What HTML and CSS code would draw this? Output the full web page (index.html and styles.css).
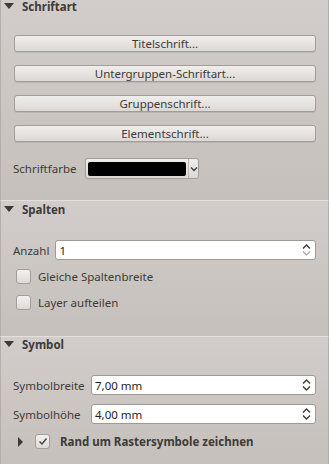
FILE: index.html
```html
<!doctype html>
<html lang="de">
<head>
	<meta charset="UTF-8">
	<title>Legende</title>
	<link rel="stylesheet" href="styles.css">
</head>
<body>

<div class="panel">

	<!-- Schriftart -->
	<div class="section sec-font">
		<div class="sec-head"><span class="tri-down"></span>Schriftart</div>
		<div class="sec-body">
			<div class="btn-stack">
				<div class="btn">Titelschrift...</div>
				<div class="btn">Untergruppen-Schriftart...</div>
				<div class="btn">Gruppenschrift...</div>
				<div class="btn">Elementschrift...</div>
			</div>
			<div class="color-row">
				<span class="lbl">Schriftfarbe</span>
				<div class="color-btn">
					<span class="swatch"></span>
					<span class="drop">
						<svg width="8" height="6" viewBox="0 0 8 6"><path d="M1 1.5 L4 4.5 L7 1.5" fill="none" stroke="#3c3b37" stroke-width="1.3"/></svg>
					</span>
				</div>
			</div>
		</div>
	</div>

	<!-- Spalten -->
	<div class="section sec-cols">
		<div class="sec-head"><span class="tri-down"></span>Spalten</div>
		<div class="sec-body">
			<div class="form-row row-anzahl">
				<span class="lbl">Anzahl</span>
				<div class="spin">
					<span class="spin-val">1</span>
					<svg class="spin-arrows" width="9" height="14" viewBox="0 0 9 14"><path d="M1 5.5 L4.5 2 L8 5.5" fill="none" stroke="#3c3b37" stroke-width="1.4"/><path d="M1 8.5 L4.5 12 L8 8.5" fill="none" stroke="#a9a5a1" stroke-width="1.2"/></svg>
				</div>
			</div>
			<div class="check-row"><span class="check"></span>Gleiche Spaltenbreite</div>
			<div class="check-row"><span class="check"></span>Layer aufteilen</div>
		</div>
	</div>

	<!-- Symbol -->
	<div class="section sec-symbol">
		<div class="sec-head"><span class="tri-down"></span>Symbol</div>
		<div class="sec-body">
			<div class="sym-grid">
				<span class="lbl">Symbolbreite</span>
				<div class="spin">
					<span class="spin-val">7,00 mm</span>
					<svg class="spin-arrows" width="9" height="14" viewBox="0 0 9 14"><path d="M1 5.5 L4.5 2 L8 5.5" fill="none" stroke="#3c3b37" stroke-width="1.4"/><path d="M1 8.5 L4.5 12 L8 8.5" fill="none" stroke="#3c3b37" stroke-width="1.4"/></svg>
				</div>
				<span class="lbl">Symbolhöhe</span>
				<div class="spin">
					<span class="spin-val">4,00 mm</span>
					<svg class="spin-arrows" width="9" height="14" viewBox="0 0 9 14"><path d="M1 5.5 L4.5 2 L8 5.5" fill="none" stroke="#3c3b37" stroke-width="1.4"/><path d="M1 8.5 L4.5 12 L8 8.5" fill="none" stroke="#3c3b37" stroke-width="1.4"/></svg>
				</div>
			</div>
			<div class="raster-row">
				<span class="tri-right"></span>
				<span class="check checked">
					<svg width="10" height="9" viewBox="0 0 10 9"><path d="M1.5 4.5 L4 7 L8.5 1.5" fill="none" stroke="#4a4844" stroke-width="1.5"/></svg>
				</span>
				<span class="raster-lbl">Rand um Rastersymbole zeichnen</span>
			</div>
		</div>
	</div>

</div>

</body>
</html>
```

FILE: styles.css
```css
body { margin: 0; background-color: #c6c0bc; font-family: "Noto Sans", "DejaVu Sans", sans-serif; font-size: 11.5px; color: #3c3b37; }
.panel { width: 329px; height: 464px; overflow: hidden; }

.section { border-left: 1px solid #b5afaa; border-right: 1px solid #b5afaa; border-top: 1px solid #e4e0dd; background: linear-gradient(#d2cdca, #c6c0bc); }
.sec-font { height: 200px; border-top: none; }
.sec-cols { height: 135px; }
.sec-symbol { height: 127px; }

.sec-head { display: flex; align-items: center; height: 14px; font-weight: bold; padding-left: 3px; }
.sec-font .sec-head { height: 12px; margin-top: 0; }
.sec-cols .sec-head { margin-top: 1px; }
.sec-symbol .sec-head { margin-top: 0; }
.tri-down { width: 0; height: 0; border-left: 5px solid transparent; border-right: 5px solid transparent; border-top: 6px solid #3c3b37; margin-right: 8px; }
.tri-right { width: 0; height: 0; border-top: 5px solid transparent; border-bottom: 5px solid transparent; border-left: 5px solid #3c3b37; }

.sec-body { padding: 0 12px 0 11px; }

.btn-stack { display: flex; flex-direction: column; gap: 13px; padding-top: 23px; padding-left: 2px; }
.btn { height: 15px; line-height: 15px; text-align: center; border: 1px solid #a29d98; border-radius: 3px; background: linear-gradient(#f0eeec, #dcd8d5); box-shadow: 0 1px 0 rgba(0,0,0,0.08); }

.color-row { display: flex; align-items: center; gap: 9px; margin-top: 16px; padding-left: 1px; }
.color-btn { display: flex; align-items: center; width: 112px; height: 19px; border: 1px solid #a29d98; border-radius: 3px; background: linear-gradient(#f0eeec, #dcd8d5); }
.swatch { width: 98px; height: 14px; margin-left: 2px; background-color: #000000; border-radius: 2px; }
.drop { display: flex; align-items: center; justify-content: center; flex: 1; height: 100%; border-left: 1px solid #b9b4b0; margin-left: 2px; }

.form-row { display: flex; align-items: center; gap: 6px; }
.row-anzahl { margin-top: 24px; padding-left: 1px; }
.spin { flex: 1; display: flex; align-items: center; height: 18px; border: 1px solid #9e9994; border-radius: 3px; background-color: #ffffff; padding: 0 4px 0 3px; }
.spin-val { flex: 1; color: #1f1e1c; }
.spin-arrows { display: block; }

.check-row { display: flex; align-items: center; gap: 7px; margin-left: 4px; margin-top: 9px; height: 14px; }
.check-row + .check-row { margin-top: 12px; }
.check { width: 13px; height: 13px; border: 1px solid #a29d98; border-radius: 3px; background: linear-gradient(#f3f1ef, #dedad7); flex: none; display: flex; align-items: center; justify-content: center; }

.sym-grid { display: grid; grid-template-columns: 78px 1fr; row-gap: 9px; align-items: center; margin-top: 24px; padding-left: 1px; }

.raster-row { display: flex; align-items: center; margin-top: 10px; padding-left: 6px; }
.raster-row .check { margin-left: 12px; }
.raster-lbl { font-weight: bold; margin-left: 10px; }
```
